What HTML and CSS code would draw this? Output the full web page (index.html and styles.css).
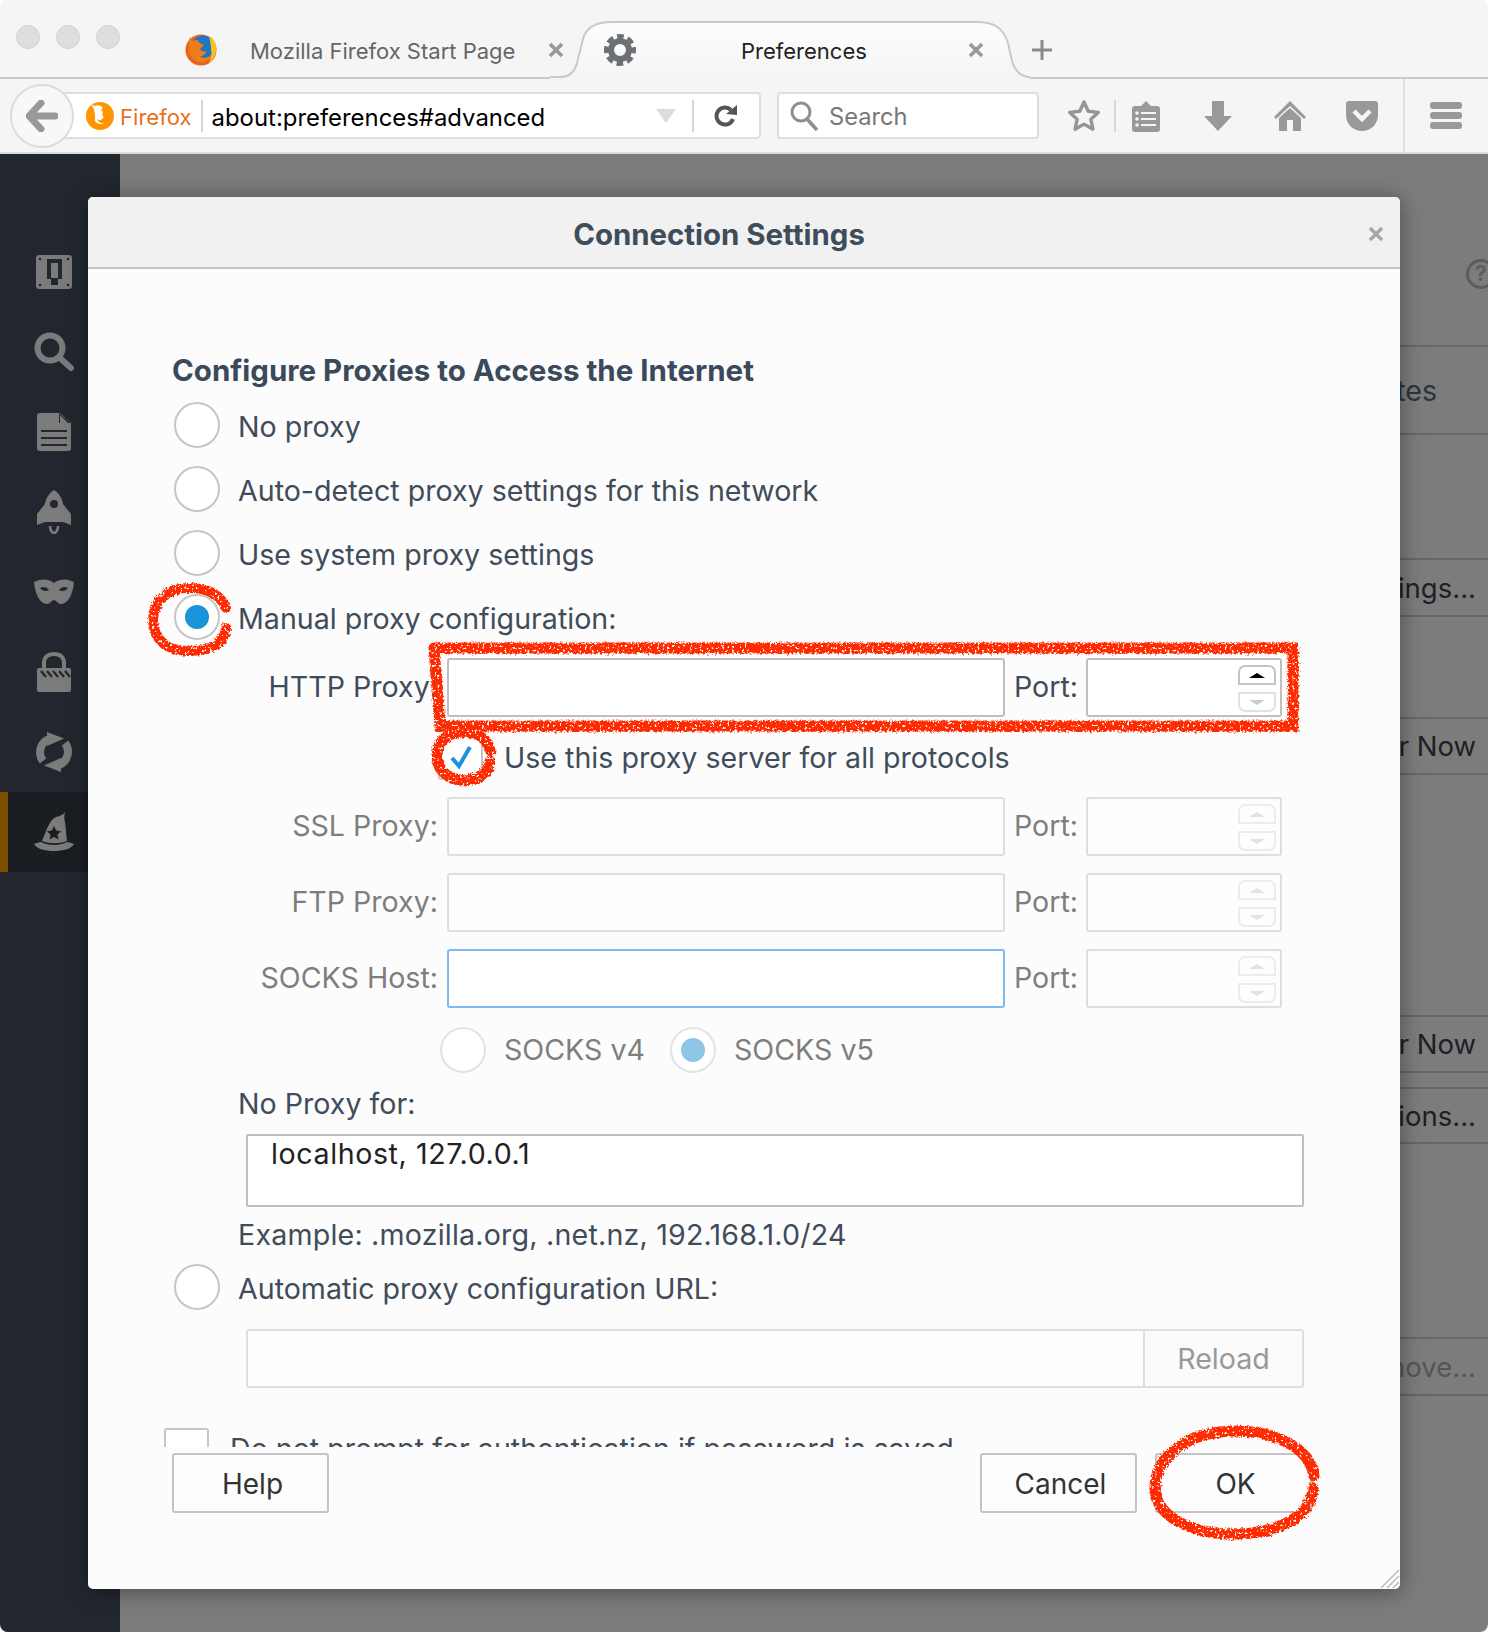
FILE: index.html
```html
<!DOCTYPE html>
<html lang="en">
<head>
  <meta charset="UTF-8">
  <title>Preferences</title>
  <link rel="stylesheet" href="styles.css">
</head>
<body>
  <div class="window">
    <div class="tabstrip">
      <div class="lights"><span></span><span></span><span></span></div>
      <div class="tab">
        <svg class="favicon" width="32" height="32" viewBox="0 0 32 32">
          <circle cx="16" cy="16" r="15.500" fill="#e8641b"/>
          <circle cx="18" cy="13" r="11.500" fill="#1f78c1"/>
          <path d="M24 2c6 3 8 9 7 15-1 6-4 10-7 12 2-5 3-9 2-14 0-4-1-9-2-13z" fill="#f7c21e"/>
          <path d="M5 3C3 9 3 15 5 20c3 6 8 9 14 8 3-1 6-3 7-7-3 3-8 4-11 1 3 0 6-2 6-5-2 1-5 0-6-2 1-2 4-2 3-5-3 0-5-2-5-4-2 0-4 0-5 1-1-1-2-3-3-4z" fill="#ef7d1a"/>
        </svg>
        <span class="tab-title">Mozilla Firefox Start Page</span>
        <svg class="tab-x" width="16" height="16" viewBox="0 0 16 16"><path d="M2 2l12 12M14 2L2 14" stroke="#999" stroke-width="3.600"/></svg>
      </div>
      <div class="tab tab-active">
        <svg class="tab-shape" width="480" height="58" viewBox="0 0 480 58">
          <defs>
            <linearGradient id="tabfill" x1="0" y1="0" x2="0" y2="1">
              <stop offset="0" stop-color="#fdfdfd"/>
              <stop offset="1" stop-color="#f5f5f5"/>
            </linearGradient>
          </defs>
          <path d="M0 58V56H10C22 56 26 48 28 38L33 18C36 6 46 1 62 1H427C443 1 453 6 458 22L462 40C465 50 470 56 480 56V58Z" fill="url(#tabfill)"/>
          <path d="M0 56H10C22 56 26 48 28 38L33 18C36 6 46 1 62 1H427C443 1 453 6 458 22L462 40C465 50 470 56 480 56" fill="none" stroke="#c9c9c9" stroke-width="2"/>
        </svg>
        <svg class="gear" width="32" height="34" viewBox="0 0 32 34">
          <circle cx="16" cy="17" r="9" fill="none" stroke="#6c7075" stroke-width="6"/>
          <circle cx="16" cy="17" r="13.500" fill="none" stroke="#6c7075" stroke-width="5" stroke-dasharray="6.600 4" stroke-dashoffset="3.300"/>
        </svg>
        <span class="tab-title tab-title-active">Preferences</span>
        <svg class="tab-x tab-x-active" width="16" height="16" viewBox="0 0 16 16"><path d="M2 2l12 12M14 2L2 14" stroke="#999" stroke-width="3.600"/></svg>
      </div>
      <svg class="newtab" width="20" height="22" viewBox="0 0 20 22"><path d="M10 1v20M0 11h20" stroke="#8a8a8a" stroke-width="3"/></svg>
    </div>

    <div class="toolbar">
      <div class="back">
        <svg width="32" height="32" viewBox="0 0 32 32"><path d="M15 3L3 16l12 13M4 16h25" fill="none" stroke="#999" stroke-width="7" stroke-linejoin="round" stroke-linecap="round"/></svg>
      </div>
      <div class="urlbar">
        <svg class="identity" width="28" height="30" viewBox="0 0 28 30">
          <circle cx="14" cy="15" r="14" fill="#ff9500"/>
          <path d="M5 3c2 1 3 2 4 2 2-1 4-1 6 0 2 1 2 3 0 4 1 1 3 2 1 5 2 1 2 3 0 4-2 2-4 1-5 0 1 3 4 5 8 4-4 2-8 1-10-2C9 16 10 10 5 3z" fill="#fff"/>
        </svg>
        <span class="identity-label">Firefox</span>
        <span class="urlbar-sep"></span>
        <span class="url">about:preferences#advanced</span>
        <svg class="dropmarker" width="20" height="14" viewBox="0 0 20 14"><path d="M0 0h20L10 14z" fill="#dcdcdc"/></svg>
        <span class="urlbar-sep urlbar-sep-end"></span>
        <svg class="reload" width="24" height="24" viewBox="0 0 24 24"><path d="M19 15a8.500 8.500 0 1 1-2-9" fill="none" stroke="#555" stroke-width="4"/><path d="M12 10L23 1v10z" fill="#555"/></svg>
      </div>
      <div class="searchbar">
        <svg width="30" height="30" viewBox="0 0 30 30"><circle cx="11" cy="11" r="9" fill="none" stroke="#8f8f8f" stroke-width="3"/><path d="M17 18l10 11" stroke="#8f8f8f" stroke-width="3.600"/></svg>
        <span class="search-text">Search</span>
      </div>
      <svg class="star" width="34" height="34" viewBox="0 0 34 34"><path d="M17 3l4.200 9.300 10.100 1.100-7.500 6.800 2.100 10L17 25.100l-8.900 5.100 2.100-10-7.500-6.800 10.100-1.100z" fill="none" stroke="#959595" stroke-width="3.400" stroke-linejoin="round"/></svg>
      <span class="tool-sep"></span>
      <div class="tool-btn tool-first">
        <svg width="28" height="32" viewBox="0 0 28 32"><path d="M3 6h6l5-5 5 5h6q3 0 3 3v20q0 3-3 3H3q-3 0-3-3V9q0-3 3-3z" fill="#999"/><path d="M9 13h15M9 19h15M9 25h15" stroke="#f5f5f5" stroke-width="2"/><circle cx="5" cy="13" r="1.800" fill="#f5f5f5"/><circle cx="5" cy="19" r="1.800" fill="#f5f5f5"/><circle cx="5" cy="25" r="1.800" fill="#f5f5f5"/></svg>
      </div>
      <div class="tool-btn">
        <svg width="28" height="30" viewBox="0 0 28 30"><path d="M8 0h12v15h8L14 30 0 15h8z" fill="#999"/></svg>
      </div>
      <div class="tool-btn">
        <svg width="32" height="30" viewBox="0 0 32 30"><path d="M16 0L32 16l-2 2L16 5 2 18l-2-2z" fill="#999"/><path d="M16 7l11 10v13h-8V19h-6v11H5V17z" fill="#999"/></svg>
      </div>
      <div class="tool-btn">
        <svg width="32" height="30" viewBox="0 0 32 30"><path d="M3 0h26q3 0 3 3v11c0 9-7 16-16 16S0 23 0 14V3q0-3 3-3z" fill="#999"/><path d="M8 10l8 8 8-8" fill="none" stroke="#f5f5f5" stroke-width="4.500"/></svg>
      </div>
      <span class="tool-divider"></span>
      <div class="hamburger"><span></span><span></span><span></span></div>
    </div>

    <div class="content">
      <nav class="sidebar">
        <div class="nav-item">
          <svg width="40" height="40" viewBox="0 0 40 40"><rect x="2" y="3" width="36" height="34" rx="3" fill="#7b7b7b"/><path d="M13 7h15v20h-4v6h-7v-6h-4z" fill="#22272f"/><rect x="17" y="11" width="7" height="15" fill="#7b7b7b"/><g fill="#22272f"><circle cx="6" cy="7" r="1.300"/><circle cx="34" cy="7" r="1.300"/><circle cx="6" cy="33" r="1.300"/><circle cx="34" cy="33" r="1.300"/></g></svg>
        </div>
        <div class="nav-item">
          <svg width="40" height="40" viewBox="0 0 40 40"><circle cx="16" cy="16" r="12.500" fill="none" stroke="#7b7b7b" stroke-width="6"/><path d="M26 26l11 10" stroke="#7b7b7b" stroke-width="6" stroke-linecap="round"/></svg>
        </div>
        <div class="nav-item">
          <svg width="40" height="40" viewBox="0 0 40 40"><path d="M6 1h20l11 10v25q0 3-3 3H6q-3 0-3-3V4q0-3 3-3z" fill="#7b7b7b"/><path d="M25 1v10h12z" fill="#22272f"/><path d="M26 3l8 8h-8z" fill="#7b7b7b"/><path d="M7 19h26M7 26h26M7 33h26" stroke="#22272f" stroke-width="2"/></svg>
        </div>
        <div class="nav-item">
          <svg width="40" height="44" viewBox="0 0 40 44"><path d="M20 0c5 3 8 8 9 14l8 10v11l-8-3H11l-8 3V24l8-10c1-6 4-11 9-14z" fill="#7b7b7b"/><circle cx="20" cy="14" r="4" fill="#22272f"/><path d="M16 36c0 4 2 7 4 7s4-3 4-7" fill="none" stroke="#7b7b7b" stroke-width="2.500"/></svg>
        </div>
        <div class="nav-item">
          <svg width="40" height="26" viewBox="0 0 40 26"><path d="M0 3c8-4 15-3 20 1 5-4 12-5 20-1-1 12-6 22-13 22-3 0-5-4-7-4s-4 4-7 4C6 25 1 15 0 3z" fill="#7b7b7b"/><path d="M6 9c3-2 7-1 9 2-3 2-7 1-9-2zM34 9c-3-2-7-1-9 2 3 2 7 1 9-2z" fill="#22272f"/></svg>
        </div>
        <div class="nav-item">
          <svg width="40" height="42" viewBox="0 0 40 42"><path d="M10 18v-6C10 6 14 3 20 3s10 3 10 9v6" fill="none" stroke="#7b7b7b" stroke-width="4"/><rect x="3" y="17" width="34" height="24" rx="2" fill="#7b7b7b"/><path d="M7 20l5 6M13 20l5 6M19 20l5 6M25 20l5 6M31 20l5 6" stroke="#22272f" stroke-width="2.200"/></svg>
        </div>
        <div class="nav-item">
          <svg width="40" height="40" viewBox="0 0 40 40"><path d="M16 6.500A14.500 14.500 0 0 0 9 29" fill="none" stroke="#7b7b7b" stroke-width="8"/><path d="M13 0l17 6.500L13 14z" fill="#7b7b7b"/><path d="M24 33.500A14.500 14.500 0 0 0 31 11" fill="none" stroke="#7b7b7b" stroke-width="8"/><path d="M27 40l-17-6.500L27 26z" fill="#7b7b7b"/></svg>
        </div>
        <div class="nav-item nav-item-active">
          <svg width="40" height="40" viewBox="0 0 40 40"><path d="M8 29C12 20 15 8 22 5c4-1 7-2 9-5-1 4-1 7 0 10 1 6 1 13 2 19-8 3-17 3-25 0z" fill="#7b7b7b"/><path d="M20 14l2.200 4.600 5 .6-3.700 3.400 1 5-4.500-2.500-4.500 2.500 1-5-3.700-3.400 5-.6z" fill="#1a1e23"/><path d="M0 32c3-1 5-2 7-2 7 4 19 4 26 0 2 0 4 1 7 2-3 5-11 7-20 7S3 37 0 32z" fill="#7b7b7b"/></svg>
        </div>
      </nav>

      <div class="prefs">
        <div class="help"><span class="help-mark">?</span></div>
        <div class="pref-row pref-row-tes">tes</div>
        <div class="pref-row pref-row-ings">ings...</div>
        <div class="pref-row pref-row-now1">r Now</div>
        <div class="pref-row pref-row-now2">r Now</div>
        <div class="pref-row pref-row-ions">ions...</div>
        <div class="pref-row pref-row-move pref-row-off">move...</div>
      </div>

      <div class="dialog">
        <div class="dialog-head">
          <span class="dialog-title">Connection Settings</span>
          <svg class="dialog-x" width="16" height="16" viewBox="0 0 16 16"><path d="M2 2l12 12M14 2L2 14" stroke="#a8a8a8" stroke-width="3.600"/></svg>
        </div>

        <div class="dialog-body">
          <h3 class="section">Configure Proxies to Access the Internet</h3>
          <div class="radio-row"><span class="radio"></span><label>No proxy</label></div>
          <div class="radio-row"><span class="radio"></span><label>Auto-detect proxy settings for this network</label></div>
          <div class="radio-row"><span class="radio"></span><label>Use system proxy settings</label></div>
          <div class="radio-row"><span class="radio"><span class="dot"></span></span><label>Manual proxy configuration:</label></div>

          <div class="proxy-row proxy-first">
            <label class="proxy-label">HTTP Proxy:</label>
            <div class="field"></div>
            <label class="port-label">Port:</label>
            <div class="port"><span class="spin spin-up"><i class="tri-up tri-on"></i></span><span class="spin spin-down"><i class="tri-down"></i></span></div>
          </div>
          <div class="check-row">
            <span class="checkbox">
              <svg width="28" height="28" viewBox="0 0 28 28"><path d="M5 15l7 8L23 4" fill="none" stroke="#1a94d8" stroke-width="4"/></svg>
            </span>
            <label>Use this proxy server for all protocols</label>
          </div>
          <div class="proxy-row off">
            <label class="proxy-label">SSL Proxy:</label>
            <div class="field"></div>
            <label class="port-label">Port:</label>
            <div class="port"><span class="spin spin-up"><i class="tri-up"></i></span><span class="spin spin-down"><i class="tri-down"></i></span></div>
          </div>
          <div class="proxy-row off">
            <label class="proxy-label">FTP Proxy:</label>
            <div class="field"></div>
            <label class="port-label">Port:</label>
            <div class="port"><span class="spin spin-up"><i class="tri-up"></i></span><span class="spin spin-down"><i class="tri-down"></i></span></div>
          </div>
          <div class="proxy-row off">
            <label class="proxy-label">SOCKS Host:</label>
            <div class="field field-focus"></div>
            <label class="port-label">Port:</label>
            <div class="port"><span class="spin spin-up"><i class="tri-up"></i></span><span class="spin spin-down"><i class="tri-down"></i></span></div>
          </div>
          <div class="socks-row off">
            <span class="radio"></span><label>SOCKS v4</label>
            <span class="radio radio-v5"><span class="dot"></span></span><label>SOCKS v5</label>
          </div>

          <div class="noproxy-label">No Proxy for:</div>
          <div class="textarea">localhost, 127.0.0.1</div>
          <div class="example">Example: .mozilla.org, .net.nz, 192.168.1.0/24</div>
          <div class="radio-row radio-auto"><span class="radio"></span><label>Automatic proxy configuration URL:</label></div>
          <div class="autourl">
            <div class="autourl-input"></div>
            <div class="autourl-btn">Reload</div>
          </div>
          <div class="auth-row">
            <span class="auth-box"></span>
            <label>Do not prompt for authentication if password is saved</label>
          </div>
        </div>

        <div class="dialog-foot">
          <button class="btn">Help</button>
          <span class="foot-gap"></span>
          <button class="btn btn-cancel">Cancel</button>
          <button class="btn btn-ok">OK</button>
        </div>

        <svg class="grip" width="20" height="20" viewBox="0 0 20 20"><path d="M1 19L19 1M7 19L19 7M13 19l6-6" stroke="#bbb" stroke-width="1.500"/></svg>
      </div>
    </div>

    <!-- red marker scribbles drawn over the screenshot -->
    <svg class="marks" width="1488" height="1632" viewBox="0 0 1488 1632">
      <defs>
        <filter id="rough" filterUnits="userSpaceOnUse" x="0" y="0" width="1488" height="1632">
          <feTurbulence type="fractalNoise" baseFrequency="0.4" numOctaves="2" seed="4" result="n"/>
          <feDisplacementMap in="SourceGraphic" in2="n" scale="6" result="d"/>
          <feColorMatrix in="n" type="matrix" values="0 0 0 0 0 0 0 0 0 0 0 0 0 0 0 0 0 0 -9 6.400" result="holes"/>
          <feComposite in="d" in2="holes" operator="in"/>
        </filter>
      </defs>
      <g filter="url(#rough)" fill="none" stroke="#ff2a00" stroke-linecap="round">
        <path stroke-width="10" d="M226 608C220 593 205 588 188 588C168 588 153 601 153 620C153 640 168 651 188 651C208 651 224 645 226 628"/>
        <path stroke-width="11" d="M434 648H1293V726H440L434 648"/>
        <path stroke-width="11" d="M490 750C487 737 475 732 463 732C446 732 437 743 437 756C437 771 450 780 463 780C478 780 489 773 490 761"/>
        <path stroke-width="11" d="M1314 1476C1310 1450 1280 1431 1235 1431C1190 1431 1155 1455 1155 1488C1155 1518 1195 1534 1232 1534C1275 1534 1311 1518 1313 1488"/>
      </g>
    </svg>
  </div>
</body>
</html>
```

FILE: styles.css
```css
* {
  box-sizing: border-box;
}

html,
body {
  margin: 0;
  background: #fff;
}

body {
  font-family: Inter, "Liberation Sans", sans-serif;
  font-size: 28.6px;
  color: #404c5a;
}

.window {
  position: relative;
  width: 1488px;
  height: 1632px;
  border-radius: 8px;
  overflow: hidden;
  display: flex;
  flex-direction: column;
}

/* tabs */
.tabstrip {
  height: 79px;
  flex: none;
  display: flex;
  background: #f5f5f5;
  border-bottom: 2px solid #c9c9c9;
}

.lights {
  display: flex;
  gap: 16px;
  padding: 25px 0 0 16px;
}

.lights span {
  width: 24px;
  height: 24px;
  border-radius: 50%;
  background: #dedede;
  border: 1px solid #d2d2d2;
}

.tab {
  width: 430px;
  height: 54px;
  margin-top: 23px;
  display: flex;
  align-items: center;
  font-size: 22px;
  color: #666;
}

.favicon {
  margin-left: 65px;
  flex: none;
}

.tab-title {
  margin-left: 33px;
  padding-top: 2px;
  white-space: nowrap;
}

.tab-x {
  margin-left: 33px;
  flex: none;
}

.tab-active {
  position: relative;
  width: 480px;
  height: 58px;
  margin-top: 21px;
  color: #222;
}

.tab-shape {
  position: absolute;
  left: 0;
  top: 0;
}

.gear {
  position: relative;
  margin-left: 54px;
}

.tab-title-active {
  position: relative;
  margin-left: 105px;
}

.tab-x-active {
  position: relative;
  margin-left: auto;
  margin-right: 46px;
}

.newtab {
  margin: 39px 0 0 2px;
}

/* toolbar */
.toolbar {
  height: 75px;
  flex: none;
  display: flex;
  align-items: center;
  background: #f5f5f5;
  border-bottom: 2px solid #dcdcdc;
}

.back {
  position: relative;
  z-index: 1;
  width: 64px;
  height: 64px;
  margin-left: 10px;
  flex: none;
  display: flex;
  align-items: center;
  justify-content: center;
  border-radius: 50%;
  background: #f8f8f8;
  border: 2px solid #dcdcdc;
}

.urlbar {
  width: 701px;
  height: 47px;
  margin-left: -14px;
  display: flex;
  align-items: center;
  background: #fff;
  border: 2px solid #dedede;
  border-left: 0;
  border-radius: 0 4px 4px 0;
}

.identity {
  margin-left: 26px;
  flex: none;
}

.identity-label {
  margin-left: 6px;
  padding-top: 2px;
  color: #e8711a;
  font-size: 22.100px;
}

.urlbar-sep {
  width: 2px;
  height: 32px;
  margin-left: 9px;
  background: #d6d6d6;
}

.url {
  margin-left: 9px;
  padding-top: 3px;
  color: #000;
  font-size: 23.900px;
}

.dropmarker {
  margin-left: auto;
}

.urlbar-sep-end {
  margin-left: 16px;
}

.reload {
  flex: none;
  margin: 0 21px 0 20px;
}

.searchbar {
  width: 262px;
  height: 47px;
  margin-left: 16px;
  padding-left: 11px;
  display: flex;
  align-items: center;
  gap: 9px;
  background: #fff;
  border: 2px solid #dedede;
  border-radius: 4px;
  color: #777;
  font-size: 23.700px;
}

.search-text {
  padding-top: 2px;
}

.star {
  margin-left: 28px;
  flex: none;
}

.tool-sep {
  width: 2px;
  height: 32px;
  margin-left: 13px;
  background: #d8d8d8;
}

.tool-btn {
  width: 60px;
  margin-left: 12px;
  display: flex;
  justify-content: center;
}

.tool-first {
  margin-left: 0;
}

.tool-divider {
  width: 2px;
  margin-left: 11px;
  align-self: stretch;
  background: #e0e0e0;
}

.hamburger {
  width: 32px;
  margin-left: 25px;
  display: flex;
  flex-direction: column;
  gap: 3px;
}

.hamburger span {
  height: 7px;
  border-radius: 3px;
  background: #999;
}

/* dimmed preferences page */
.content {
  position: relative;
  flex: 1;
  display: flex;
  background: #7c7c7c;
}

.sidebar {
  width: 120px;
  flex: none;
  padding-top: 78px;
  background: #22272f;
}

.nav-item {
  height: 80px;
  display: flex;
  align-items: center;
  padding-left: 34px;
}

.nav-item-active {
  background: #1a1e23;
  border-left: 8px solid #7f4e00;
  padding-left: 26px;
}

.prefs {
  flex: 1;
  overflow: hidden;
  font-size: 27.500px;
  color: #1d2026;
}

.help {
  display: flex;
  justify-content: flex-end;
  margin: 105px -8px 0 0;
}

.help-mark {
  width: 30px;
  height: 30px;
  border: 3px solid #5c5c5c;
  border-radius: 50%;
  color: #5c5c5c;
  font-size: 21px;
  font-weight: 700;
  line-height: 24px;
  text-align: center;
}

.pref-row {
  padding-right: 12px;
  display: flex;
  align-items: center;
  justify-content: flex-end;
  border-top: 2px solid #666;
  border-bottom: 2px solid #666;
}

.pref-row-tes {
  margin-top: 56px;
  height: 90px;
  padding-right: 51px;
  font-size: 28.600px;
  color: #2b3440;
}

.pref-row-ings {
  margin-top: 123px;
  height: 59px;
}

.pref-row-now1 {
  margin-top: 100px;
  height: 58px;
}

.pref-row-now2 {
  margin-top: 240px;
  height: 58px;
}

.pref-row-ions {
  margin-top: 14px;
  height: 57px;
}

.pref-row-move {
  margin-top: 193px;
  height: 59px;
}

.pref-row-off {
  color: #555;
}

/* dialog */
.dialog {
  position: absolute;
  left: 88px;
  top: 43px;
  width: 1312px;
  height: 1392px;
  display: flex;
  flex-direction: column;
  background: #fcfcfc;
  border-radius: 5px;
  box-shadow: 0 2px 22px rgba(0, 0, 0, 0.4);
}

.dialog-head {
  position: relative;
  height: 72px;
  flex: none;
  padding: 5px 50px 0 0;
  display: flex;
  align-items: center;
  justify-content: center;
  background: #f1f1f1;
  border-bottom: 2px solid #c4c4c4;
  border-radius: 5px 5px 0 0;
}

.dialog-title {
  font-weight: 700;
  font-size: 29.400px;
  color: #3f4c5a;
}

.dialog-x {
  position: absolute;
  right: 16px;
  top: 29px;
}

.dialog-body {
  flex: 1;
  min-height: 0;
  overflow: hidden;
  padding: 82px 0 0 84px;
}

.section {
  height: 42px;
  margin: 0;
  font-size: 29.500px;
  line-height: 38px;
  font-weight: 700;
  color: #3b4a5b;
}

.radio-row {
  height: 64px;
  margin-left: 2px;
  display: flex;
  align-items: center;
  gap: 18px;
}

.radio-row label {
  padding-top: 3px;
}

.radio {
  width: 46px;
  height: 46px;
  flex: none;
  display: flex;
  align-items: center;
  justify-content: center;
  border: 2px solid #c6c6c6;
  border-radius: 50%;
  background: #fff;
}

.dot {
  width: 24px;
  height: 24px;
  border-radius: 50%;
  background: #1a94d8;
}

.proxy-row {
  height: 59px;
  margin-top: 17px;
  display: flex;
  align-items: center;
}

.proxy-first {
  margin-top: 9px;
}

.check-row + .proxy-row {
  margin-top: 0;
}

.proxy-label {
  width: 266px;
  padding-bottom: 2px;
  text-align: right;
  white-space: nowrap;
}

.field {
  width: 558px;
  height: 59px;
  margin-left: 9px;
  background: #fff;
  border: 2px solid #bfbfbf;
  border-radius: 3px;
}

.port-label {
  width: 72px;
  margin-left: 9px;
  padding-bottom: 2px;
}

.port {
  width: 196px;
  height: 59px;
  padding: 5px 4px 0 0;
  display: flex;
  flex-direction: column;
  align-items: flex-end;
  gap: 7px;
  background: #fff;
  border: 2px solid #bfbfbf;
  border-radius: 3px;
}

.spin {
  width: 38px;
  height: 20px;
  display: flex;
  align-items: center;
  justify-content: center;
  border: 2px solid #c4c4c4;
}

.spin-up {
  border-radius: 7px 7px 0 0;
}

.spin-down {
  border-color: #e2e2e2;
  border-radius: 0 0 7px 7px;
}

.tri-up,
.tri-down {
  width: 0;
  height: 0;
  border-left: 8px solid transparent;
  border-right: 8px solid transparent;
}

.tri-up {
  border-bottom: 5px solid #ddd;
}

.tri-on {
  border-bottom-color: #000;
}

.tri-down {
  border-top: 5px solid #ccc;
}

.off {
  color: #7e7e7e;
}

.off .field,
.off .port {
  background: #fdfdfd;
  border-color: #dedede;
}

.off .field-focus {
  background: #fff;
  border-color: #7fb9f2;
}

.off .spin {
  border-color: #ececec;
}

.off .tri-up,
.off .tri-down {
  border-bottom-color: #e2e2e2;
  border-top-color: #e2e2e2;
}

.check-row {
  height: 80px;
  padding-left: 266px;
  display: flex;
  align-items: center;
  gap: 21px;
}

.check-row label {
  padding-top: 1px;
}

.checkbox {
  width: 45px;
  height: 45px;
  flex: none;
  display: flex;
  align-items: center;
  justify-content: center;
  background: #fff;
  border: 2px solid #c6c6c6;
  border-radius: 3px;
}

.socks-row {
  height: 64px;
  margin-top: 10px;
  padding-left: 268px;
  display: flex;
  align-items: center;
}

.socks-row .radio {
  border-color: #e3e3e3;
}

.socks-row label {
  margin-left: 18px;
  padding-bottom: 1px;
}

.socks-row .radio-v5 {
  margin-left: 25px;
}

.socks-row .dot {
  background: #8ec6e8;
}

.noproxy-label {
  height: 46px;
  padding-left: 66px;
  line-height: 44px;
}

.textarea {
  width: 1058px;
  height: 73px;
  margin: 6px 0 0 74px;
  padding-left: 23px;
  background: #fff;
  border: 2px solid #bfbfbf;
  border-radius: 2px;
  color: #222;
  line-height: 36px;
  letter-spacing: 0.6px;
}

.example {
  height: 34px;
  margin-top: 11px;
  padding-left: 66px;
  line-height: 34px;
  letter-spacing: 0.2px;
}

.radio-auto {
  margin-top: 3px;
}

.autourl {
  width: 1058px;
  height: 59px;
  margin: 10px 0 0 74px;
  display: flex;
  background: #fdfdfd;
  border: 2px solid #dedede;
  border-radius: 3px;
}

.autourl-input {
  flex: 1;
  border-right: 2px solid #dedede;
}

.autourl-btn {
  width: 157px;
  display: flex;
  align-items: center;
  justify-content: center;
  background: #fbfbfb;
  color: #999;
}

.auth-row {
  height: 45px;
  margin: 40px 0 0 -8px;
  display: flex;
  align-items: center;
  gap: 21px;
}

.auth-row label {
  padding-bottom: 4px;
}

.auth-box {
  width: 45px;
  height: 45px;
  flex: none;
  background: #fff;
  border: 2px solid #c6c6c6;
  border-radius: 3px;
}

.dialog-foot {
  height: 142px;
  flex: none;
  padding: 6px 88px 0 84px;
  display: flex;
  align-items: flex-start;
}

.btn {
  width: 157px;
  height: 60px;
  padding: 2px 0 0 4px;
  background: #fdfdfd;
  border: 2px solid #c4c4c4;
  border-radius: 3px;
  font-family: Inter, "Liberation Sans", sans-serif;
  font-size: 28px;
  color: #333;
}

.foot-gap {
  flex: 1;
}

.btn-ok {
  margin-left: 18px;
}

.grip {
  position: absolute;
  right: 0;
  bottom: 0;
}

.marks {
  position: absolute;
  left: 0;
  top: 0;
  pointer-events: none;
}
```
